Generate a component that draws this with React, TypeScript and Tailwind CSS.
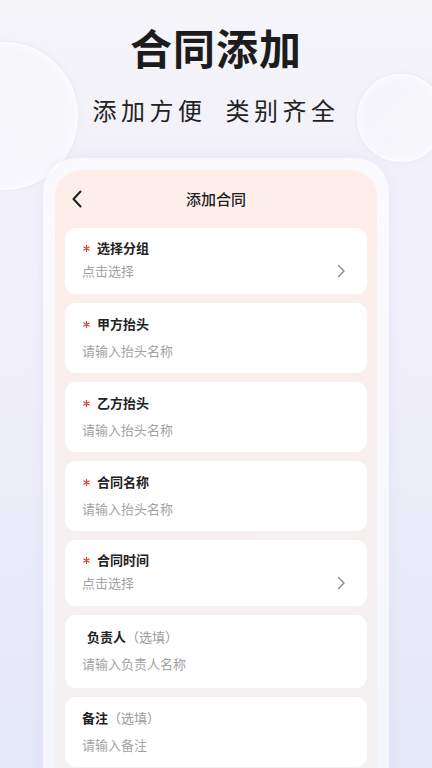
import * as React from "react";

type Field = {
  label: string;
  required?: boolean;
  optional?: boolean;
  value: string;
  select?: boolean;
  indent?: boolean;
};

const FIELDS: Field[] = [
  { label: "选择分组", required: true, value: "点击选择", select: true },
  { label: "甲方抬头", required: true, value: "请输入抬头名称" },
  { label: "乙方抬头", required: true, value: "请输入抬头名称" },
  { label: "合同名称", required: true, value: "请输入抬头名称" },
  { label: "合同时间", required: true, value: "点击选择", select: true },
  { label: "负责人", optional: true, value: "请输入负责人名称", indent: true },
  { label: "备注", optional: true, value: "请输入备注" },
];

function ChevronRight() {
  return (
    <svg width="9" height="14" viewBox="0 0 9 14" fill="none">
      <path d="M1.5 1.5L7 7l-5.5 5.5" stroke="#8a8a8a" strokeWidth="1.4" strokeLinecap="round" strokeLinejoin="round" />
    </svg>
  );
}

function Star() {
  return (
    <svg className="mr-[7px] ml-[1px]" width="7" height="7" viewBox="0 0 8 8" fill="none">
      <path d="M4 0.6v6.8M1 2.2l6 3.6M7 2.2l-6 3.6" stroke="#d2483c" strokeWidth="1.4" strokeLinecap="round" />
    </svg>
  );
}

function FieldCard({ f }: { f: Field }) {
  const height = f.select ? "h-[66px] pt-[11px]" : f.indent ? "h-[73px] pt-[13px]" : "h-[70px] pt-[12px]";
  return (
    <div className={`flex flex-col rounded-[11px] bg-white pl-[17px] pr-[21px] ${height}`}>
      <div className="flex h-[18px] items-center text-[13px] leading-[18px]">
        {f.required && <Star />}
        <span className={`font-bold text-[#222] ${f.indent ? "ml-[5px]" : ""}`}>{f.label}</span>
        {f.optional && <span className="text-[#9a9a9a]">（选填）</span>}
      </div>
      <div
        className={`flex items-center justify-between text-[13px] leading-[18px] text-[#a3a3a3] ${
          f.select ? "mt-[5px]" : "mt-[9px]"
        }`}
      >
        <span>{f.value}</span>
        {f.select && <ChevronRight />}
      </div>
    </div>
  );
}

export default function App() {
  return (
    <div
      className="relative h-[768px] w-[432px] overflow-hidden bg-gradient-to-b from-[#f5f4f9] via-[#efeefa] to-[#e5e8f8]"
      style={{ fontFamily: '"Noto Sans CJK SC", "Noto Sans", sans-serif' }}
    >
      {/* bubbles */}
      <div className="absolute left-[-70px] top-[42px] h-[148px] w-[148px] rounded-full border border-white/80 bg-gradient-to-br from-white/10 to-white/40 shadow-[inset_0_0_12px_rgba(255,255,255,0.7),0_0_4px_rgba(210,210,230,0.4)]" />
      <div className="absolute left-[357px] top-[74px] h-[88px] w-[88px] rounded-full border border-white/80 bg-gradient-to-br from-white/10 to-white/40 shadow-[inset_0_0_8px_rgba(255,255,255,0.7),0_0_4px_rgba(210,210,230,0.4)]" />

      <div className="relative flex flex-col items-center">
        <h1 className="mt-[21px] text-[42px] font-bold leading-[52px] tracking-[1px] text-[#1c1c1c]">合同添加</h1>
        <div className="mt-[21px] flex gap-[19px] text-[24px] leading-[32px] text-[#222]">
          <span className="tracking-[4.5px]">添加方便</span>
          <span className="tracking-[4.5px]">类别齐全</span>
        </div>

        {/* phone frame */}
        <div className="mt-[32px] w-[346px] rounded-t-[34px] bg-white/60 px-[12px] pt-[12px] shadow-[0_0_12px_rgba(200,200,230,0.25)]">
          <div className="h-[640px] rounded-t-[26px] bg-gradient-to-b from-[#fdeee9] via-[#f6f0f0] to-[#f3f1f4] px-[10px]">
            <div className="relative flex h-[58px] items-center justify-center">
              <svg className="absolute left-[6px]" width="12" height="18" viewBox="0 0 12 18" fill="none">
                <path d="M9.5 1.5L2.5 9l7 7.5" stroke="#1f1f1f" strokeWidth="2" strokeLinecap="round" strokeLinejoin="round" />
              </svg>
              <span className="text-[15px] font-medium text-[#222]">添加合同</span>
            </div>
            <div className="flex flex-col gap-[9px]">
              {FIELDS.map((f) => (
                <FieldCard key={f.label} f={f} />
              ))}
            </div>
          </div>
        </div>
      </div>
    </div>
  );
}
